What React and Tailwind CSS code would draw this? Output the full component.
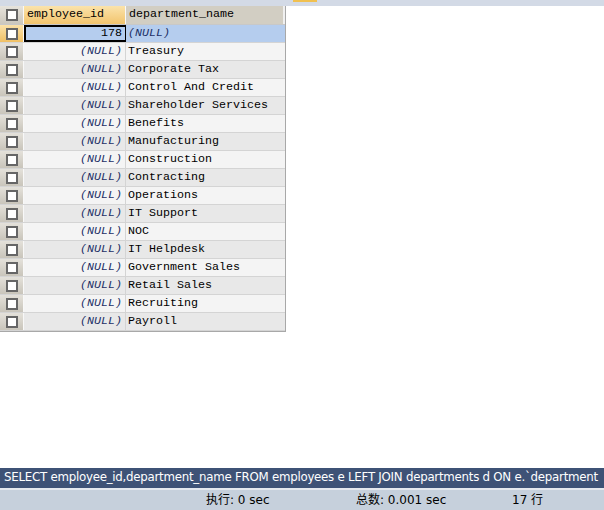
const rows = [
  ["178", null],
  [null, "Treasury"],
  [null, "Corporate Tax"],
  [null, "Control And Credit"],
  [null, "Shareholder Services"],
  [null, "Benefits"],
  [null, "Manufacturing"],
  [null, "Construction"],
  [null, "Contracting"],
  [null, "Operations"],
  [null, "IT Support"],
  [null, "NOC"],
  [null, "IT Helpdesk"],
  [null, "Government Sales"],
  [null, "Retail Sales"],
  [null, "Recruiting"],
  [null, "Payroll"],
];

const mono = "font-['Liberation_Mono','Courier_New',monospace] text-[11.67px]";

function Check() {
  return <span className="block w-3 h-3 border-2 border-[#666] bg-white" />;
}

function Null() {
  return <span className="italic text-[#1c2f66]">(NULL)</span>;
}

export default function App() {
  return (
    <div className="w-[604px] h-[510px] bg-white flex flex-col overflow-hidden">
      <div className="h-[6px] bg-[#d3dae6] flex">
        <div className="ml-[293px] w-[24px] h-[2px] bg-[#f0c050]" />
      </div>

      <div className={`w-[286px] border-r border-b border-[#a8a8a8] ${mono} text-black`}>
        <div className="flex h-[19px] border-b border-[#c8c8c8]">
          <div className="w-[24px] flex items-center justify-center bg-gradient-to-b from-[#e6e3dc] to-[#cbc7bd] border-r border-[#f8f8f8]">
            <Check />
          </div>
          <div className="w-[102px] flex items-center px-[3px] bg-gradient-to-b from-[#fbe3aa] to-[#f2c46c] border-r border-[#f8f8f8]">
            employee_id
          </div>
          <div className="flex-1 flex items-center px-[3px] bg-[#d2cec3] border-r-2 border-[#f0f0f0]">
            department_name
          </div>
        </div>
        {rows.map(([id, name], i) => {
          const sel = i === 0;
          const bg = sel ? "bg-[#b5cdee]" : i % 2 === 1 ? "bg-[#f4f4f4]" : "bg-[#e8e8e8]";
          return (
            <div key={i} className="flex h-[18px] border-b border-[#d4d4d4]">
              <div
                className={`w-[24px] flex items-center justify-center border-r border-[#f8f8f8] bg-gradient-to-b ${
                  sel ? "from-[#fbe2a8] to-[#f0c064]" : "from-[#e4e1da] to-[#c9c5bb]"
                }`}
              >
                <Check />
              </div>
              <div
                className={`w-[102px] flex items-center justify-end px-[3px] border-r border-[#d4d4d4] ${
                  sel ? "bg-[#b5cdee] border-2 border-black" : bg
                }`}
              >
                {id ?? <Null />}
              </div>
              <div className={`flex-1 flex items-center px-[2px] ${bg}`}>
                {name ?? <Null />}
              </div>
            </div>
          );
        })}
      </div>

      <div className="flex-1" />

      <div className="h-[20px] bg-[#3e5276] text-white flex items-center px-[4px] whitespace-nowrap overflow-hidden font-['DejaVu_Sans','Noto_Sans_CJK_SC',sans-serif] text-[11.8px] tracking-[-0.25px]">
        SELECT employee_id,department_name FROM employees e LEFT JOIN departments d ON e.`department
      </div>
      <div className="h-[2px] bg-[#e4e8ee]" />
      <div className="h-[20px] bg-[#c6d0dc] flex items-center text-[12px] text-black font-['DejaVu_Sans','Noto_Sans_CJK_SC',sans-serif] whitespace-nowrap">
        <span className="ml-[206px] w-[150px]">执行: 0 sec</span>
        <span className="w-[156px]">总数: 0.001 sec</span>
        <span>17 行</span>
      </div>
    </div>
  );
}
